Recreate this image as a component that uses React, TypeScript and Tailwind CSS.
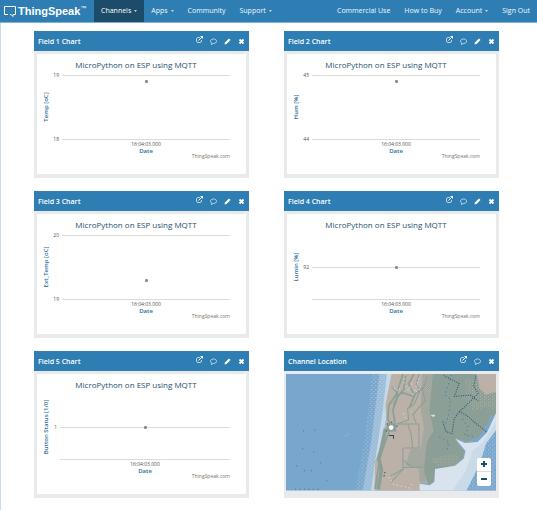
import React from "react";

const FONT = '"Open Sans", "Noto Sans", sans-serif';

function Caret() {
  return (
    <svg viewBox="0 0 4 2" className="h-[2px] w-[3px]" aria-hidden="true">
      <path d="M0 0h4L2 2z" fill="currentColor" />
    </svg>
  );
}

function NavLink({ label, caret, active }: { label: string; caret?: boolean; active?: boolean }) {
  return (
    <a
      href="#"
      className={
        active
          ? "flex h-full items-center gap-[3px] bg-[#1c4c69] px-[7px] text-white"
          : "flex h-full items-center gap-[3px] px-[7px] text-[#f2f8fc]"
      }
    >
      {label}
      {caret && <Caret />}
    </a>
  );
}

function IconButton({ label, raised, children }: { label: string; raised?: boolean; children: React.ReactNode }) {
  return (
    <button type="button" aria-label={label} className={raised ? "flex pb-[5px]" : "flex"}>
      <svg viewBox="0 0 14 14" className="size-[7px]" fill="none" stroke="currentColor" strokeWidth="1.6" aria-hidden="true">
        {children}
      </svg>
    </button>
  );
}

function Panel({ title, editable = true, children }: { title: string; editable?: boolean; children: React.ReactNode }) {
  return (
    <section className="bg-[#e9eaeb]">
      <header className="flex h-5 items-center justify-between bg-[#2e7eb3] pt-px pr-1 pl-1 text-white">
        <h2 className="text-[7px] leading-[10px] font-semibold">{title}</h2>
        <div className="flex items-center gap-[7px]">
          <IconButton label="Open in new window" raised>
            <path d="M8 3H4Q1 3 1 6v4q0 3 3 3h4q3 0 3-3V8" strokeWidth="1.300" />
            <path d="M5 9l6-6" strokeWidth="2" />
            <path d="M8 0h6v6z" fill="currentColor" stroke="none" />
          </IconButton>
          <IconButton label="Comment">
            <path d="M7 2C3.500 2 1 4 1 6.500c0 1.500 1 2.800 2.500 3.500L3 13l3.500-2H7c3.500 0 6-2 6-4.500S10.500 2 7 2z" strokeWidth="1.300" />
          </IconButton>
          {editable && (
            <IconButton label="Edit">
              <path d="M1 13l1-4 8-8 3 3-8 8z" fill="currentColor" stroke="none" />
            </IconButton>
          )}
          <IconButton label="Close">
            <path d="M3 3l8 8M11 3l-8 8" strokeWidth="3.600" />
          </IconButton>
        </div>
      </header>
      <div className="px-[3px] pt-[3px] pb-1">{children}</div>
    </section>
  );
}

type ChartData = {
  title: string;
  axis: string;
  ticks: { label: string; y: number }[];
  point: number;
  left?: number;
};

const charts: ChartData[] = [
  { title: "Field 1 Chart", axis: "Temp [oC]", ticks: [{ label: "19", y: 21 }, { label: "18", y: 85 }], point: 27 },
  { title: "Field 2 Chart", axis: "Hum [%]", ticks: [{ label: "45", y: 21 }, { label: "44", y: 85 }], point: 27 },
  { title: "Field 3 Chart", axis: "Ext_Temp [oC]", ticks: [{ label: "20", y: 21 }, { label: "19", y: 85 }], point: 66 },
  { title: "Field 4 Chart", axis: "Lumin [%]", ticks: [{ label: "92", y: 53 }], point: 53 },
  { title: "Field 5 Chart", axis: "Button Status [1/0]", ticks: [{ label: "1", y: 53 }], point: 53, left: 23 },
];

function Chart({ axis, ticks, point, left = 25 }: ChartData) {
  const mid = (left + 193) / 2;
  return (
    <svg viewBox="0 0 209 120" className="block w-full bg-white" role="img" aria-label={axis}>
      <text x="99" y="14" textAnchor="middle" fontSize="8" fontWeight="500" fill="#24526e">MicroPython on ESP using MQTT</text>
      <path d={`M${left} 85.500H193`} stroke="#dcdcdc" />
      {ticks.map((t) => (
        <g key={t.label}>
          <path d={`M${left} ${t.y + 0.5}H193`} stroke="#dcdcdc" />
          <text x={left - 3} y={t.y + 2} textAnchor="end" fontSize="5" fill="#505050">{t.label}</text>
        </g>
      ))}
      <rect x={mid - 1} y={point - 1} width="3" height="3" rx="1" fill="#84938a" />
      <text transform="translate(11 53) rotate(-90)" textAnchor="middle" fontSize="6" fontWeight="600" fill="#2e6f9b">{axis}</text>
      <text x={mid} y="92" textAnchor="middle" fontSize="5" fontWeight="500" fill="#505050">16:04:03.000</text>
      <text x={mid} y="99" textAnchor="middle" fontSize="6" fontWeight="600" fill="#2e6f9b">Date</text>
      <text x="193" y="104" textAnchor="end" fontSize="5" fill="#7d756c">ThingSpeak.com</text>
    </svg>
  );
}

function LocationMap() {
  return (
    <div className="relative -ml-px">
      <svg viewBox="33 87 627 348" className="block w-full" role="img" aria-label="Map of central Chile and Argentina">
        <defs>
          <pattern id="fine" width="6" height="6" patternUnits="userSpaceOnUse">
            <path d="M0 0h3v3H0zM3 3h3v3H3z" fill="#bdd3e5" />
          </pattern>
          <pattern id="sparse" width="12" height="12" patternUnits="userSpaceOnUse">
            <path d="M0 0h3v3H0zM6 6h3v3H6z" fill="#bdd3e5" />
          </pattern>
          <pattern id="green" width="6" height="6" patternUnits="userSpaceOnUse">
            <path d="M0 0h3v3H0zM3 3h3v3H3z" fill="#8b9f96" />
          </pattern>
          <pattern id="tan" width="12" height="9" patternUnits="userSpaceOnUse">
            <path d="M0 0h3v3H0zM6 5h3v3H6z" fill="#bbb1a8" />
          </pattern>
        </defs>
        <path d="M33 87h627v348H33z" fill="#78a6cd" />
        <path d="M290 87h60L300 435h-60l30-160z" fill="url(#sparse)" />
        <path d="M312 87h40L305 435h-43l26-150z" fill="url(#fine)" />
        <path d="M334 87h18L315 330 305 435h-18l15-110 20-130z" fill="#c4d8e8" />
        <path d="M348 87h312v117l-16 12-12 25-22 34-36 16-36-14 12 24 16 15-5 22-22 20-35 12-26 2-2 38-11 6-31-4v23H297l2-87 12-32 22-92-3-45z" fill="#bbb1a8" />
        <path d="M472 87h128l8 22 52 35v60l-16 12-12 25-22 34-36 16-36-14 12 24 16 15-5 22-22 20-35 12-26 2-2 38-11 6-10-2-10-40 8-80 20-40-12-60z" fill="#8b9f96" />
        <path d="M440 87h40v120l-10 50-15 50-5 105-18-4-2-38-40-10 15-50h30l10-60-10-60z" fill="url(#green)" />
        <path d="M568 100l45 5 45 35v52l-35-5-30 12-25-35z" fill="url(#tan)" />
        <path d="M605 87h55v52l-30 10-20-20z" fill="#bbb1a8" />
        <path d="M465 340l65-14 25 10-18 22-55 2z" fill="url(#tan)" />
        <path d="M660 204v231H432v-20l30 4 14-10 2-38 60-10 26-22 5-22-30-37 28 13 38-3 28-28z" fill="#d8e3ed" />
        <path d="M660 228v207H530l38-55 22-65 30-22z" fill="url(#fine)" />
        <path d="M660 255v180H572l40-80 18-60z" fill="#78a6cd" />
        <path d="M660 238v197H535l70-125z" fill="url(#sparse)" />
        <g fill="none" stroke="#8b9f96" strokeWidth="5">
          <path d="M382 87l-18 58-24 36-3 39 10 23-17 45-16 47-15 95" />
          <path d="M330 250l-10 50-10 40 8 34-10 58" strokeWidth="11" />
          <path d="M391 87l-6 45-18 22-15 40 6 38M415 87l-16 30 18 34-16 38M360 155l20-12 32 10 30-25" />
        </g>
        <g fill="none" stroke="#8b9f96" strokeWidth="3">
          <path d="M430 87l-9 32 13 16-18 42-20 13 3 34-35 12M455 95l-15 42 9 30-21 22-16 20 10 26" />
          <path d="M365 236h65v72h-45M382 308v58l64-1M397 238l10 30 4 38M345 392l40-23M384 345l25 20M384 370l-37 40M348 125l20 22-15 32" />
        </g>
        <g fill="none" stroke="#dfe3e4" strokeWidth="3" strokeDasharray="3 9">
          <path d="M390 88l-4 28 13 20 12-25M355 130l17 8 1-18M383 205l10 17M340 395l15 22 46 10 12-18M430 100l-17 47 26-20" />
          <path d="M466 210h12M470 213h6" strokeDasharray="none" />
        </g>
        <g fill="none" stroke="#1f516e" strokeWidth="3" strokeDasharray="3 4">
          <path d="M504 92l46 23-14 39 47-4 24 18M607 145l-38 37-18 17 22 12 30 26 28 22M551 199l-16 22-6 44-18-6-10-30M600 92l-7 32 14 19" />
        </g>
        <g fill="none" stroke="#2d7db4" strokeWidth="3" strokeDasharray="3 10">
          <path d="M527 90l-20 60 18 13-7 50-15 40M491 275l28 14-5 25M560 222l18 25-12 22 35 5" />
        </g>
        <path d="M84 257h3M117 254h3M81 310h3M114 319h3M63 361h3M87 376h3M107 376h3M135 352h3M153 406h3M60 431h3M73 431h3M87 431h3M100 431h3M113 431h3M127 431h3" stroke="#2d7db4" strokeWidth="3" />
        <path d="M210 271h3M217 266h3" stroke="#c8c8c8" strokeWidth="3" />
        <path d="M334 234h28v25h-28z" fill="#8b9f96" />
        <path d="M346 231h4M362 243h4M334 236h3M340 271h14v9M331 257h3M326 382h4M324 391h4" stroke="#1c4c69" strokeWidth="3" fill="none" />
        <circle cx="347" cy="247" r="7" fill="#fff" />
      </svg>
      <div className="absolute right-[5px] bottom-[5px] flex w-[14px] flex-col overflow-hidden rounded-[2px] bg-white text-[#1c4c69]">
        <button type="button" aria-label="Zoom in" className="flex h-[14px] items-center justify-center border-b border-[#dddddd]">
          <svg viewBox="0 0 6 6" className="size-[6px]"><path d="M0 3h6M3 0v6" stroke="currentColor" strokeWidth="2" /></svg>
        </button>
        <button type="button" aria-label="Zoom out" className="flex h-[14px] items-center justify-center">
          <svg viewBox="0 0 6 6" className="size-[6px]"><path d="M0 3h6" stroke="currentColor" strokeWidth="2" /></svg>
        </button>
      </div>
    </div>
  );
}

export default function App() {
  return (
    <div className="min-h-screen border-l border-[#c5dcec] bg-white" style={{ fontFamily: FONT }}>
      <nav className="-ml-px flex h-[23px] items-center justify-between border-b border-[#7fb4d8] bg-[#2e7eb3] text-[7px] leading-[10px] font-medium">
        <div className="flex h-full items-center">
          <a href="#" aria-label="ThingSpeak" className="flex w-[94px] items-center gap-[2px] pl-1 text-white">
            <svg viewBox="0 0 12 12" className="size-[12px]" fill="none" stroke="currentColor" aria-hidden="true">
              <path d="M4 9.500H.5v-8h11v8H9v2l-2-2H6" />
            </svg>
            <span className="flex items-start font-['Liberation_Sans',sans-serif] text-[11px] leading-[14px] font-bold">
              ThingSpeak<span className="text-[6px] leading-[8px] font-normal">™</span>
            </span>
          </a>
          <NavLink label="Channels" caret active />
          <NavLink label="Apps" caret />
          <NavLink label="Community" />
          <NavLink label="Support" caret />
        </div>
        <div className="flex h-full items-center">
          <NavLink label="Commercial Use" />
          <NavLink label="How to Buy" />
          <NavLink label="Account" caret />
          <NavLink label="Sign Out" />
        </div>
      </nav>
      <main className="grid grid-cols-2 gap-x-[35px] gap-y-[13px] pt-2 pr-[38px] pb-3 pl-[33px]">
        {charts.map((c) => (
          <Panel key={c.title} title={c.title}>
            <Chart {...c} />
          </Panel>
        ))}
        <Panel title="Channel Location" editable={false}>
          <LocationMap />
        </Panel>
      </main>
    </div>
  );
}
